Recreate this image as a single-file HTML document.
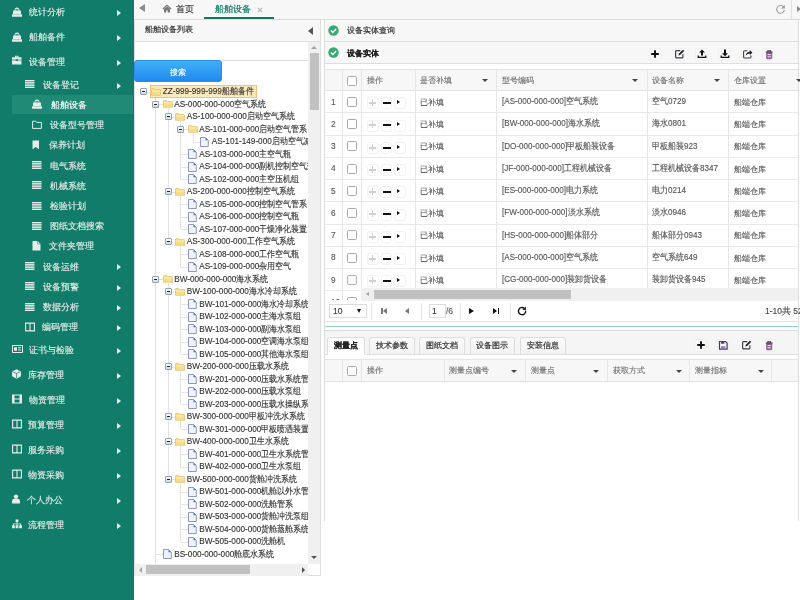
<!DOCTYPE html><html><head><meta charset="utf-8"><title>船舶设备</title><style>
*{box-sizing:border-box;margin:0;padding:0}
html,body{width:800px;height:600px;overflow:hidden;background:#fff}
body{position:relative;font-family:"Liberation Sans",sans-serif;color:#333}
.ab{position:absolute}
.t{position:absolute;white-space:nowrap;line-height:1;-webkit-text-stroke:0.12px currentColor}
.s{-webkit-text-stroke:0.2px currentColor}
body{filter:blur(0.3px)}
</style></head><body>
<div class="ab" style="left:0.00px;top:0.00px;width:134.00px;height:600.00px;background:#127c6a"></div>
<svg class="ab" style="left:12.00px;top:6.50px" width="11" height="10" viewBox="0 0 11 10"><path d="M2.6 3Q2.6 0.4 5 0.4T7.4 3z M1 7V4.4q0-1.2 1.2-1.2h5.6q1.2 0 1.2 1.2V7z M0 7.3h10v2.4h-10z" fill="#e6ece8"/><rect x="3.5" y="1.9" width="3" height="1.4" fill="#127c6a" opacity="0.75"/></svg>
<div class="t" style="left:29.00px;top:8.10px;font-size:9px;color:#e2ebe6;-webkit-text-stroke:0.15px #e2ebe6">统计分析</div>
<div class="ab" style="left:117.00px;top:10.00px;width:0;height:0;border-top:3.50px solid transparent;border-bottom:3.50px solid transparent;border-left:4.50px solid #e8eeea"></div>
<svg class="ab" style="left:12.00px;top:31.50px" width="11" height="10" viewBox="0 0 11 10"><path d="M2.6 3Q2.6 0.4 5 0.4T7.4 3z M1 7V4.4q0-1.2 1.2-1.2h5.6q1.2 0 1.2 1.2V7z M0 7.3h10v2.4h-10z" fill="#e6ece8"/><rect x="3.5" y="1.9" width="3" height="1.4" fill="#127c6a" opacity="0.75"/></svg>
<div class="t" style="left:29.00px;top:33.10px;font-size:9px;color:#e2ebe6;-webkit-text-stroke:0.15px #e2ebe6">船舶备件</div>
<div class="ab" style="left:117.00px;top:35.00px;width:0;height:0;border-top:3.50px solid transparent;border-bottom:3.50px solid transparent;border-left:4.50px solid #e8eeea"></div>
<svg class="ab" style="left:12.00px;top:55.40px" width="11" height="10" viewBox="0 0 11 10"><path d="M3 0.8h3.5v1.6h-0.9v-0.7h-1.7v0.7h-0.9z M0 2.2h9.5v7.3h-9.5z" fill="#e6ece8"/><path d="M0 5h9.5" stroke="#127c6a" stroke-width="0.7"/><rect x="3.8" y="4.4" width="2" height="1.6" fill="#127c6a"/></svg>
<div class="t" style="left:29.00px;top:58.10px;font-size:9px;color:#e2ebe6;-webkit-text-stroke:0.15px #e2ebe6">设备管理</div>
<div class="ab" style="left:117.00px;top:60.00px;width:0;height:0;border-top:3.50px solid transparent;border-bottom:3.50px solid transparent;border-left:4.50px solid #e8eeea"></div>
<svg class="ab" style="left:25.00px;top:79.30px" width="11" height="10" viewBox="0 0 11 10"><rect x="0" y="1.0" width="9.5" height="1.2" fill="#e6ece8"/><rect x="0" y="2.7" width="9.5" height="1.2" fill="#e6ece8"/><rect x="0" y="4.4" width="9.5" height="1.2" fill="#e6ece8"/><rect x="0" y="6.1" width="9.5" height="1.2" fill="#e6ece8"/><rect x="0" y="7.8" width="9.5" height="1.2" fill="#e6ece8"/></svg>
<div class="t" style="left:43.00px;top:80.70px;font-size:9px;color:#e2ebe6;-webkit-text-stroke:0.15px #e2ebe6">设备登记</div>
<div class="ab" style="left:117.00px;top:82.60px;width:0;height:0;border-top:3.50px solid transparent;border-bottom:3.50px solid transparent;border-left:4.50px solid #e8eeea"></div>
<div class="ab" style="left:12.00px;top:95.00px;width:121.00px;height:19.00px;background:#218a77"></div>
<svg class="ab" style="left:32.00px;top:99.30px" width="11" height="10" viewBox="0 0 11 10"><path d="M2.6 3Q2.6 0.4 5 0.4T7.4 3z M1 7V4.4q0-1.2 1.2-1.2h5.6q1.2 0 1.2 1.2V7z M0 7.3h10v2.4h-10z" fill="#e6ece8"/><rect x="3.5" y="1.9" width="3" height="1.4" fill="#127c6a" opacity="0.75"/></svg>
<div class="t" style="left:51.00px;top:100.90px;font-size:9px;color:#ffffff;-webkit-text-stroke:0.15px #ffffff">船舶设备</div>
<svg class="ab" style="left:32.00px;top:119.70px" width="11" height="10" viewBox="0 0 11 10"><path d="M0.6 1.2h3l1 1.2h4.8v6h-8.8z" fill="none" stroke="#e6ece8" stroke-width="1"/></svg>
<div class="t" style="left:50.00px;top:121.10px;font-size:9px;color:#e2ebe6;-webkit-text-stroke:0.15px #e2ebe6">设备型号管理</div>
<svg class="ab" style="left:32.00px;top:139.90px" width="11" height="10" viewBox="0 0 11 10"><path d="M0.5 0.5h6.5v8.8l-3.25-2.4l-3.25 2.4z" fill="#e6ece8"/></svg>
<div class="t" style="left:48.50px;top:141.30px;font-size:9px;color:#e2ebe6;-webkit-text-stroke:0.15px #e2ebe6">保养计划</div>
<svg class="ab" style="left:32.00px;top:160.10px" width="11" height="10" viewBox="0 0 11 10"><rect x="0" y="1.0" width="9.5" height="1.2" fill="#e6ece8"/><rect x="0" y="2.7" width="9.5" height="1.2" fill="#e6ece8"/><rect x="0" y="4.4" width="9.5" height="1.2" fill="#e6ece8"/><rect x="0" y="6.1" width="9.5" height="1.2" fill="#e6ece8"/><rect x="0" y="7.8" width="9.5" height="1.2" fill="#e6ece8"/></svg>
<div class="t" style="left:50.00px;top:161.50px;font-size:9px;color:#e2ebe6;-webkit-text-stroke:0.15px #e2ebe6">电气系统</div>
<svg class="ab" style="left:32.00px;top:180.30px" width="11" height="10" viewBox="0 0 11 10"><rect x="0" y="1.0" width="9.5" height="1.2" fill="#e6ece8"/><rect x="0" y="2.7" width="9.5" height="1.2" fill="#e6ece8"/><rect x="0" y="4.4" width="9.5" height="1.2" fill="#e6ece8"/><rect x="0" y="6.1" width="9.5" height="1.2" fill="#e6ece8"/><rect x="0" y="7.8" width="9.5" height="1.2" fill="#e6ece8"/></svg>
<div class="t" style="left:50.00px;top:181.70px;font-size:9px;color:#e2ebe6;-webkit-text-stroke:0.15px #e2ebe6">机械系统</div>
<svg class="ab" style="left:32.00px;top:200.50px" width="11" height="10" viewBox="0 0 11 10"><rect x="0" y="1.0" width="9.5" height="1.2" fill="#e6ece8"/><rect x="0" y="2.7" width="9.5" height="1.2" fill="#e6ece8"/><rect x="0" y="4.4" width="9.5" height="1.2" fill="#e6ece8"/><rect x="0" y="6.1" width="9.5" height="1.2" fill="#e6ece8"/><rect x="0" y="7.8" width="9.5" height="1.2" fill="#e6ece8"/></svg>
<div class="t" style="left:50.00px;top:201.90px;font-size:9px;color:#e2ebe6;-webkit-text-stroke:0.15px #e2ebe6">检验计划</div>
<svg class="ab" style="left:32.00px;top:220.70px" width="11" height="10" viewBox="0 0 11 10"><rect x="0" y="1.0" width="9.5" height="1.2" fill="#e6ece8"/><rect x="0" y="2.7" width="9.5" height="1.2" fill="#e6ece8"/><rect x="0" y="4.4" width="9.5" height="1.2" fill="#e6ece8"/><rect x="0" y="6.1" width="9.5" height="1.2" fill="#e6ece8"/><rect x="0" y="7.8" width="9.5" height="1.2" fill="#e6ece8"/></svg>
<div class="t" style="left:50.00px;top:222.10px;font-size:9px;color:#e2ebe6;-webkit-text-stroke:0.15px #e2ebe6">图纸文档搜索</div>
<svg class="ab" style="left:32.00px;top:240.90px" width="11" height="10" viewBox="0 0 11 10"><path d="M0.5 0h5l3 3v6.5h-8z" fill="#e6ece8"/><path d="M5.5 0v3h3" fill="none" stroke="#127c6a" stroke-width="0.5"/></svg>
<div class="t" style="left:48.50px;top:242.30px;font-size:9px;color:#e2ebe6;-webkit-text-stroke:0.15px #e2ebe6">文件夹管理</div>
<svg class="ab" style="left:25.00px;top:261.10px" width="11" height="10" viewBox="0 0 11 10"><rect x="0" y="1.0" width="9.5" height="1.2" fill="#e6ece8"/><rect x="0" y="2.7" width="9.5" height="1.2" fill="#e6ece8"/><rect x="0" y="4.4" width="9.5" height="1.2" fill="#e6ece8"/><rect x="0" y="6.1" width="9.5" height="1.2" fill="#e6ece8"/><rect x="0" y="7.8" width="9.5" height="1.2" fill="#e6ece8"/></svg>
<div class="t" style="left:43.00px;top:262.50px;font-size:9px;color:#e2ebe6;-webkit-text-stroke:0.15px #e2ebe6">设备运维</div>
<div class="ab" style="left:117.00px;top:264.40px;width:0;height:0;border-top:3.50px solid transparent;border-bottom:3.50px solid transparent;border-left:4.50px solid #e8eeea"></div>
<svg class="ab" style="left:25.00px;top:281.30px" width="11" height="10" viewBox="0 0 11 10"><rect x="0" y="1.0" width="9.5" height="1.2" fill="#e6ece8"/><rect x="0" y="2.7" width="9.5" height="1.2" fill="#e6ece8"/><rect x="0" y="4.4" width="9.5" height="1.2" fill="#e6ece8"/><rect x="0" y="6.1" width="9.5" height="1.2" fill="#e6ece8"/><rect x="0" y="7.8" width="9.5" height="1.2" fill="#e6ece8"/></svg>
<div class="t" style="left:43.00px;top:282.70px;font-size:9px;color:#e2ebe6;-webkit-text-stroke:0.15px #e2ebe6">设备预警</div>
<div class="ab" style="left:117.00px;top:284.60px;width:0;height:0;border-top:3.50px solid transparent;border-bottom:3.50px solid transparent;border-left:4.50px solid #e8eeea"></div>
<svg class="ab" style="left:25.00px;top:301.50px" width="11" height="10" viewBox="0 0 11 10"><rect x="0" y="1.0" width="9.5" height="1.2" fill="#e6ece8"/><rect x="0" y="2.7" width="9.5" height="1.2" fill="#e6ece8"/><rect x="0" y="4.4" width="9.5" height="1.2" fill="#e6ece8"/><rect x="0" y="6.1" width="9.5" height="1.2" fill="#e6ece8"/><rect x="0" y="7.8" width="9.5" height="1.2" fill="#e6ece8"/></svg>
<div class="t" style="left:43.00px;top:302.90px;font-size:9px;color:#e2ebe6;-webkit-text-stroke:0.15px #e2ebe6">数据分析</div>
<div class="ab" style="left:117.00px;top:304.80px;width:0;height:0;border-top:3.50px solid transparent;border-bottom:3.50px solid transparent;border-left:4.50px solid #e8eeea"></div>
<svg class="ab" style="left:25.00px;top:321.70px" width="11" height="10" viewBox="0 0 11 10"><path d="M0.6 1.1h8.8v7.8h-8.8z M5 1.1v7.8" fill="none" stroke="#e6ece8" stroke-width="1.1"/></svg>
<div class="t" style="left:42.00px;top:323.10px;font-size:9px;color:#e2ebe6;-webkit-text-stroke:0.15px #e2ebe6">编码管理</div>
<div class="ab" style="left:117.00px;top:325.00px;width:0;height:0;border-top:3.50px solid transparent;border-bottom:3.50px solid transparent;border-left:4.50px solid #e8eeea"></div>
<svg class="ab" style="left:12.00px;top:344.30px" width="11" height="10" viewBox="0 0 11 10"><path d="M0.5 1.5h10v7h-10z" fill="none" stroke="#e6ece8" stroke-width="1"/><path d="M2 3.2h3v3.6h-3z M6 3.2h3v1h-3z M6 5.4h3v1h-3z" fill="#e6ece8"/></svg>
<div class="t" style="left:29.00px;top:345.70px;font-size:9px;color:#e2ebe6;-webkit-text-stroke:0.15px #e2ebe6">证书与检验</div>
<div class="ab" style="left:117.00px;top:347.60px;width:0;height:0;border-top:3.50px solid transparent;border-bottom:3.50px solid transparent;border-left:4.50px solid #e8eeea"></div>
<svg class="ab" style="left:12.00px;top:369.30px" width="11" height="10" viewBox="0 0 11 10"><path d="M4.5 0.3l4.5 2.2v4.8l-4.5 2.5l-4.5-2.5v-4.8z" fill="#e6ece8"/><path d="M0.5 2.6l4 2l4-2 M4.5 4.6v4.5" stroke="#127c6a" stroke-width="0.7" fill="none"/></svg>
<div class="t" style="left:28.00px;top:370.70px;font-size:9px;color:#e2ebe6;-webkit-text-stroke:0.15px #e2ebe6">库存管理</div>
<div class="ab" style="left:117.00px;top:372.60px;width:0;height:0;border-top:3.50px solid transparent;border-bottom:3.50px solid transparent;border-left:4.50px solid #e8eeea"></div>
<svg class="ab" style="left:12.00px;top:394.30px" width="11" height="10" viewBox="0 0 11 10"><path d="M0 0.5h10v9h-10z" fill="#e6ece8"/><path d="M2.5 1.5h5v3h-5z M2.5 5.5h5v3h-5z" fill="#127c6a"/></svg>
<div class="t" style="left:29.00px;top:395.70px;font-size:9px;color:#e2ebe6;-webkit-text-stroke:0.15px #e2ebe6">物资管理</div>
<div class="ab" style="left:117.00px;top:397.60px;width:0;height:0;border-top:3.50px solid transparent;border-bottom:3.50px solid transparent;border-left:4.50px solid #e8eeea"></div>
<svg class="ab" style="left:12.00px;top:419.30px" width="11" height="10" viewBox="0 0 11 10"><path d="M0.6 1.1h8.8v7.8h-8.8z M5 1.1v7.8" fill="none" stroke="#e6ece8" stroke-width="1.1"/></svg>
<div class="t" style="left:27.50px;top:420.70px;font-size:9px;color:#e2ebe6;-webkit-text-stroke:0.15px #e2ebe6">预算管理</div>
<div class="ab" style="left:117.00px;top:422.60px;width:0;height:0;border-top:3.50px solid transparent;border-bottom:3.50px solid transparent;border-left:4.50px solid #e8eeea"></div>
<svg class="ab" style="left:12.00px;top:444.30px" width="11" height="10" viewBox="0 0 11 10"><path d="M0.6 1.1h8.8v7.8h-8.8z M5 1.1v7.8" fill="none" stroke="#e6ece8" stroke-width="1.1"/></svg>
<div class="t" style="left:27.50px;top:445.70px;font-size:9px;color:#e2ebe6;-webkit-text-stroke:0.15px #e2ebe6">服务采购</div>
<div class="ab" style="left:117.00px;top:447.60px;width:0;height:0;border-top:3.50px solid transparent;border-bottom:3.50px solid transparent;border-left:4.50px solid #e8eeea"></div>
<svg class="ab" style="left:12.00px;top:469.30px" width="11" height="10" viewBox="0 0 11 10"><path d="M0.6 1.1h8.8v7.8h-8.8z M5 1.1v7.8" fill="none" stroke="#e6ece8" stroke-width="1.1"/></svg>
<div class="t" style="left:27.50px;top:470.70px;font-size:9px;color:#e2ebe6;-webkit-text-stroke:0.15px #e2ebe6">物资采购</div>
<div class="ab" style="left:117.00px;top:472.60px;width:0;height:0;border-top:3.50px solid transparent;border-bottom:3.50px solid transparent;border-left:4.50px solid #e8eeea"></div>
<svg class="ab" style="left:12.00px;top:494.30px" width="11" height="10" viewBox="0 0 11 10"><circle cx="4" cy="2.6" r="2.2" fill="#e6ece8"/><path d="M0 9.5v-2.5q0-2 2-2.2h4q2 .2 2 2.2v2.5z" fill="#e6ece8"/></svg>
<div class="t" style="left:26.50px;top:495.70px;font-size:9px;color:#e2ebe6;-webkit-text-stroke:0.15px #e2ebe6">个人办公</div>
<div class="ab" style="left:117.00px;top:497.60px;width:0;height:0;border-top:3.50px solid transparent;border-bottom:3.50px solid transparent;border-left:4.50px solid #e8eeea"></div>
<svg class="ab" style="left:12.00px;top:519.30px" width="11" height="10" viewBox="0 0 11 10"><path d="M3.6 0.5h2.8v2.5h-2.8z M4.6 3h0.8v1.6h-0.8z M1 4.4h8v0.8h-8z M1 5.2h0.8v1h-0.8z M4.6 5.2h0.8v1h-0.8z M8.2 5.2h0.8v1h-0.8z M0 6.2h2.8v3h-2.8z M3.6 6.2h2.8v3h-2.8z M7.2 6.2h2.8v3h-2.8z" fill="#e6ece8"/></svg>
<div class="t" style="left:28.00px;top:520.70px;font-size:9px;color:#e2ebe6;-webkit-text-stroke:0.15px #e2ebe6">流程管理</div>
<div class="ab" style="left:117.00px;top:522.60px;width:0;height:0;border-top:3.50px solid transparent;border-bottom:3.50px solid transparent;border-left:4.50px solid #e8eeea"></div>
<div class="ab" style="left:134.00px;top:0.00px;width:666.00px;height:20.00px;background:#f7f7f7;border-bottom:1px solid #dcdcdc"></div>
<div class="ab" style="left:139.00px;top:4.00px;width:0;height:0;border-top:4.75px solid transparent;border-bottom:4.75px solid transparent;border-right:6.00px solid #8a8a8a"></div>
<svg class="ab" style="left:162.00px;top:4.00px" width="10" height="9" viewBox="0 0 10 9"><path d="M5 0.5L0.5 4.6l0.8 0.8L5 2.1l3.7 3.3l0.8-0.8z M2 5v3.5h2.2v-2h1.6v2H8V5L5 2.5z" fill="#7a7a7a"/></svg>
<div class="t s" style="left:176.00px;top:4.70px;font-size:9.2px;color:#444;">首页</div>
<div class="t s" style="left:215.00px;top:4.70px;font-size:9.2px;color:#137966;">船舶设备</div>
<svg class="ab" style="left:256.50px;top:6.50px" width="6" height="6" viewBox="0 0 6 6"><path d="M0.8 0.8l4.4 4.4 M5.2 0.8l-4.4 4.4" stroke="#b5b5b5" stroke-width="1.1"/></svg>
<div class="ab" style="left:204.00px;top:17.00px;width:70.00px;height:2.00px;background:#137966"></div>
<svg class="ab" style="left:775.00px;top:3.50px" width="11" height="11" viewBox="0 0 11 11"><path d="M8.6 2.9A3.9 3.9 0 1 0 9.4 6.2" fill="none" stroke="#9a9a9a" stroke-width="1.1"/><path d="M9.8 0.8v3.6H6.2z" fill="#9a9a9a"/></svg>
<div class="ab" style="left:791.00px;top:0.00px;width:1.00px;height:20.00px;background:#e0e0e0"></div>
<div class="ab" style="left:797.00px;top:6.00px;width:0;height:0;border-top:3.50px solid transparent;border-bottom:3.50px solid transparent;border-left:4.00px solid #8a8a8a"></div>
<div class="ab" style="left:134.00px;top:20.00px;width:187.00px;height:556.00px;border:1px solid #dedede;border-top:none;background:#fff"></div>
<div class="ab" style="left:135.00px;top:20.00px;width:185.00px;height:22.00px;background:#f7f7f7;border-bottom:1px solid #dedede"></div>
<div class="t s" style="left:145.00px;top:26.40px;font-size:8.2px;color:#333;">船舶设备列表</div>
<div class="ab" style="left:308.00px;top:27.00px;width:0;height:0;border-top:4.25px solid transparent;border-bottom:4.25px solid transparent;border-right:5.50px solid #555"></div>
<div class="ab" style="left:221.00px;top:60.00px;width:87.00px;height:1.00px;background:#dcdcdc"></div>
<div class="ab" style="left:134.00px;top:60.00px;width:87.50px;height:21.50px;border-radius:3px;background:linear-gradient(#41b1f8,#1f89ef);border:1px solid #2a8fea"></div>
<div class="t" style="left:170.00px;top:68.15px;font-size:8.3px;color:#fff;">搜索</div>
<div class="ab" style="left:135px;top:82px;width:173px;height:481px;overflow:hidden">
<div class="ab" style="left:20.00px;top:13.50px;width:1.00px;height:471.00px;background:#e3e3e3"></div>
<div class="ab" style="left:11.00px;top:9.50px;width:5.00px;height:1.00px;background:#e3e3e3"></div>
<div class="ab" style="left:15.00px;top:3.00px;width:107.00px;height:12.50px;background:#fde8b9;border:1px solid #f9bf78"></div>
<div class="ab" style="left:4.50px;top:6.00px;width:7px;height:7px;border:1px solid #8fa3b9;border-radius:1px;background:linear-gradient(#fdfdfd,#d3d8de)"><div class="ab" style="left:1px;top:2px;width:3px;height:1px;background:#222"></div></div>
<svg class="ab" style="left:16.30px;top:5.50px" width="10" height="8" viewBox="0 0 10 8"><path d="M0.5 1.2q0-0.7 0.7-0.7h2.3l0.9 1h4.4q0.7 0 0.7 0.7v5.1h-9z" fill="#f7dd88" stroke="#dcb656" stroke-width="0.6"/><path d="M0.8 3h8.4" stroke="#fcf0c0" stroke-width="0.9"/></svg>
<div class="t" style="left:27.70px;top:6.30px;font-size:8.2px;color:#333;transform:scaleY(1.13);transform-origin:0 50%">ZZ-999-999-999船舶备件</div>
<div class="ab" style="left:32.50px;top:26.00px;width:1.00px;height:133.50px;background:#e3e3e3"></div>
<div class="ab" style="left:23.50px;top:22.00px;width:5.00px;height:1.00px;background:#e3e3e3"></div>
<div class="ab" style="left:17.00px;top:18.50px;width:7px;height:7px;border:1px solid #8fa3b9;border-radius:1px;background:linear-gradient(#fdfdfd,#d3d8de)"><div class="ab" style="left:1px;top:2px;width:3px;height:1px;background:#222"></div></div>
<svg class="ab" style="left:27.80px;top:18.00px" width="10" height="8" viewBox="0 0 10 8"><path d="M0.5 1.2q0-0.7 0.7-0.7h2.3l0.9 1h4.4q0.7 0 0.7 0.7v5.1h-9z" fill="#f7dd88" stroke="#dcb656" stroke-width="0.6"/><path d="M0.8 3h8.4" stroke="#fcf0c0" stroke-width="0.9"/></svg>
<div class="t" style="left:39.20px;top:18.80px;font-size:8.2px;color:#333;transform:scaleY(1.13);transform-origin:0 50%">AS-000-000-000空气系统</div>
<div class="ab" style="left:45.00px;top:38.50px;width:1.00px;height:58.50px;background:#e3e3e3"></div>
<div class="ab" style="left:36.00px;top:34.50px;width:5.00px;height:1.00px;background:#e3e3e3"></div>
<div class="ab" style="left:29.50px;top:31.00px;width:7px;height:7px;border:1px solid #8fa3b9;border-radius:1px;background:linear-gradient(#fdfdfd,#d3d8de)"><div class="ab" style="left:1px;top:2px;width:3px;height:1px;background:#222"></div></div>
<svg class="ab" style="left:40.30px;top:30.50px" width="10" height="8" viewBox="0 0 10 8"><path d="M0.5 1.2q0-0.7 0.7-0.7h2.3l0.9 1h4.4q0.7 0 0.7 0.7v5.1h-9z" fill="#f7dd88" stroke="#dcb656" stroke-width="0.6"/><path d="M0.8 3h8.4" stroke="#fcf0c0" stroke-width="0.9"/></svg>
<div class="t" style="left:51.70px;top:31.30px;font-size:8.2px;color:#333;transform:scaleY(1.13);transform-origin:0 50%">AS-100-000-000启动空气系统</div>
<div class="ab" style="left:57.50px;top:51.00px;width:1.00px;height:8.50px;background:#e3e3e3"></div>
<div class="ab" style="left:48.50px;top:47.00px;width:5.00px;height:1.00px;background:#e3e3e3"></div>
<div class="ab" style="left:42.00px;top:43.50px;width:7px;height:7px;border:1px solid #8fa3b9;border-radius:1px;background:linear-gradient(#fdfdfd,#d3d8de)"><div class="ab" style="left:1px;top:2px;width:3px;height:1px;background:#222"></div></div>
<svg class="ab" style="left:52.80px;top:43.00px" width="10" height="8" viewBox="0 0 10 8"><path d="M0.5 1.2q0-0.7 0.7-0.7h2.3l0.9 1h4.4q0.7 0 0.7 0.7v5.1h-9z" fill="#f7dd88" stroke="#dcb656" stroke-width="0.6"/><path d="M0.8 3h8.4" stroke="#fcf0c0" stroke-width="0.9"/></svg>
<div class="t" style="left:64.20px;top:43.80px;font-size:8.2px;color:#333;transform:scaleY(1.13);transform-origin:0 50%">AS-101-000-000启动空气管系</div>
<div class="ab" style="left:58.00px;top:59.50px;width:7.00px;height:1.00px;background:#e3e3e3"></div>
<svg class="ab" style="left:65.30px;top:54.80px" width="9" height="10" viewBox="0 0 9 10"><path d="M0.5 0.5h5l2.8 2.8v6.2h-7.8z" fill="#eef3fc" stroke="#7080b4" stroke-width="0.8"/><path d="M5.5 0.5v2.8h2.8z" fill="#5a73c4"/></svg>
<div class="t" style="left:76.70px;top:56.30px;font-size:8.2px;color:#333;transform:scaleY(1.13);transform-origin:0 50%">AS-101-149-000启动空气减压阀</div>
<div class="ab" style="left:45.50px;top:72.00px;width:7.00px;height:1.00px;background:#e3e3e3"></div>
<svg class="ab" style="left:52.80px;top:67.30px" width="9" height="10" viewBox="0 0 9 10"><path d="M0.5 0.5h5l2.8 2.8v6.2h-7.8z" fill="#eef3fc" stroke="#7080b4" stroke-width="0.8"/><path d="M5.5 0.5v2.8h2.8z" fill="#5a73c4"/></svg>
<div class="t" style="left:64.20px;top:68.80px;font-size:8.2px;color:#333;transform:scaleY(1.13);transform-origin:0 50%">AS-103-000-000主空气瓶</div>
<div class="ab" style="left:45.50px;top:84.50px;width:7.00px;height:1.00px;background:#e3e3e3"></div>
<svg class="ab" style="left:52.80px;top:79.80px" width="9" height="10" viewBox="0 0 9 10"><path d="M0.5 0.5h5l2.8 2.8v6.2h-7.8z" fill="#eef3fc" stroke="#7080b4" stroke-width="0.8"/><path d="M5.5 0.5v2.8h2.8z" fill="#5a73c4"/></svg>
<div class="t" style="left:64.20px;top:81.30px;font-size:8.2px;color:#333;transform:scaleY(1.13);transform-origin:0 50%">AS-104-000-000副机控制空气瓶</div>
<div class="ab" style="left:45.50px;top:97.00px;width:7.00px;height:1.00px;background:#e3e3e3"></div>
<svg class="ab" style="left:52.80px;top:92.30px" width="9" height="10" viewBox="0 0 9 10"><path d="M0.5 0.5h5l2.8 2.8v6.2h-7.8z" fill="#eef3fc" stroke="#7080b4" stroke-width="0.8"/><path d="M5.5 0.5v2.8h2.8z" fill="#5a73c4"/></svg>
<div class="t" style="left:64.20px;top:93.80px;font-size:8.2px;color:#333;transform:scaleY(1.13);transform-origin:0 50%">AS-102-000-000主空压机组</div>
<div class="ab" style="left:45.00px;top:113.50px;width:1.00px;height:33.50px;background:#e3e3e3"></div>
<div class="ab" style="left:36.00px;top:109.50px;width:5.00px;height:1.00px;background:#e3e3e3"></div>
<div class="ab" style="left:29.50px;top:106.00px;width:7px;height:7px;border:1px solid #8fa3b9;border-radius:1px;background:linear-gradient(#fdfdfd,#d3d8de)"><div class="ab" style="left:1px;top:2px;width:3px;height:1px;background:#222"></div></div>
<svg class="ab" style="left:40.30px;top:105.50px" width="10" height="8" viewBox="0 0 10 8"><path d="M0.5 1.2q0-0.7 0.7-0.7h2.3l0.9 1h4.4q0.7 0 0.7 0.7v5.1h-9z" fill="#f7dd88" stroke="#dcb656" stroke-width="0.6"/><path d="M0.8 3h8.4" stroke="#fcf0c0" stroke-width="0.9"/></svg>
<div class="t" style="left:51.70px;top:106.30px;font-size:8.2px;color:#333;transform:scaleY(1.13);transform-origin:0 50%">AS-200-000-000控制空气系统</div>
<div class="ab" style="left:45.50px;top:122.00px;width:7.00px;height:1.00px;background:#e3e3e3"></div>
<svg class="ab" style="left:52.80px;top:117.30px" width="9" height="10" viewBox="0 0 9 10"><path d="M0.5 0.5h5l2.8 2.8v6.2h-7.8z" fill="#eef3fc" stroke="#7080b4" stroke-width="0.8"/><path d="M5.5 0.5v2.8h2.8z" fill="#5a73c4"/></svg>
<div class="t" style="left:64.20px;top:118.80px;font-size:8.2px;color:#333;transform:scaleY(1.13);transform-origin:0 50%">AS-105-000-000控制空气管系</div>
<div class="ab" style="left:45.50px;top:134.50px;width:7.00px;height:1.00px;background:#e3e3e3"></div>
<svg class="ab" style="left:52.80px;top:129.80px" width="9" height="10" viewBox="0 0 9 10"><path d="M0.5 0.5h5l2.8 2.8v6.2h-7.8z" fill="#eef3fc" stroke="#7080b4" stroke-width="0.8"/><path d="M5.5 0.5v2.8h2.8z" fill="#5a73c4"/></svg>
<div class="t" style="left:64.20px;top:131.30px;font-size:8.2px;color:#333;transform:scaleY(1.13);transform-origin:0 50%">AS-106-000-000控制空气瓶</div>
<div class="ab" style="left:45.50px;top:147.00px;width:7.00px;height:1.00px;background:#e3e3e3"></div>
<svg class="ab" style="left:52.80px;top:142.30px" width="9" height="10" viewBox="0 0 9 10"><path d="M0.5 0.5h5l2.8 2.8v6.2h-7.8z" fill="#eef3fc" stroke="#7080b4" stroke-width="0.8"/><path d="M5.5 0.5v2.8h2.8z" fill="#5a73c4"/></svg>
<div class="t" style="left:64.20px;top:143.80px;font-size:8.2px;color:#333;transform:scaleY(1.13);transform-origin:0 50%">AS-107-000-000干燥净化装置</div>
<div class="ab" style="left:45.00px;top:163.50px;width:1.00px;height:21.00px;background:#e3e3e3"></div>
<div class="ab" style="left:36.00px;top:159.50px;width:5.00px;height:1.00px;background:#e3e3e3"></div>
<div class="ab" style="left:29.50px;top:156.00px;width:7px;height:7px;border:1px solid #8fa3b9;border-radius:1px;background:linear-gradient(#fdfdfd,#d3d8de)"><div class="ab" style="left:1px;top:2px;width:3px;height:1px;background:#222"></div></div>
<svg class="ab" style="left:40.30px;top:155.50px" width="10" height="8" viewBox="0 0 10 8"><path d="M0.5 1.2q0-0.7 0.7-0.7h2.3l0.9 1h4.4q0.7 0 0.7 0.7v5.1h-9z" fill="#f7dd88" stroke="#dcb656" stroke-width="0.6"/><path d="M0.8 3h8.4" stroke="#fcf0c0" stroke-width="0.9"/></svg>
<div class="t" style="left:51.70px;top:156.30px;font-size:8.2px;color:#333;transform:scaleY(1.13);transform-origin:0 50%">AS-300-000-000工作空气系统</div>
<div class="ab" style="left:45.50px;top:172.00px;width:7.00px;height:1.00px;background:#e3e3e3"></div>
<svg class="ab" style="left:52.80px;top:167.30px" width="9" height="10" viewBox="0 0 9 10"><path d="M0.5 0.5h5l2.8 2.8v6.2h-7.8z" fill="#eef3fc" stroke="#7080b4" stroke-width="0.8"/><path d="M5.5 0.5v2.8h2.8z" fill="#5a73c4"/></svg>
<div class="t" style="left:64.20px;top:168.80px;font-size:8.2px;color:#333;transform:scaleY(1.13);transform-origin:0 50%">AS-108-000-000工作空气瓶</div>
<div class="ab" style="left:45.50px;top:184.50px;width:7.00px;height:1.00px;background:#e3e3e3"></div>
<svg class="ab" style="left:52.80px;top:179.80px" width="9" height="10" viewBox="0 0 9 10"><path d="M0.5 0.5h5l2.8 2.8v6.2h-7.8z" fill="#eef3fc" stroke="#7080b4" stroke-width="0.8"/><path d="M5.5 0.5v2.8h2.8z" fill="#5a73c4"/></svg>
<div class="t" style="left:64.20px;top:181.30px;font-size:8.2px;color:#333;transform:scaleY(1.13);transform-origin:0 50%">AS-109-000-000杂用空气</div>
<div class="ab" style="left:32.50px;top:201.00px;width:1.00px;height:196.00px;background:#e3e3e3"></div>
<div class="ab" style="left:23.50px;top:197.00px;width:5.00px;height:1.00px;background:#e3e3e3"></div>
<div class="ab" style="left:17.00px;top:193.50px;width:7px;height:7px;border:1px solid #8fa3b9;border-radius:1px;background:linear-gradient(#fdfdfd,#d3d8de)"><div class="ab" style="left:1px;top:2px;width:3px;height:1px;background:#222"></div></div>
<svg class="ab" style="left:27.80px;top:193.00px" width="10" height="8" viewBox="0 0 10 8"><path d="M0.5 1.2q0-0.7 0.7-0.7h2.3l0.9 1h4.4q0.7 0 0.7 0.7v5.1h-9z" fill="#f7dd88" stroke="#dcb656" stroke-width="0.6"/><path d="M0.8 3h8.4" stroke="#fcf0c0" stroke-width="0.9"/></svg>
<div class="t" style="left:39.20px;top:193.80px;font-size:8.2px;color:#333;transform:scaleY(1.13);transform-origin:0 50%">BW-000-000-000海水系统</div>
<div class="ab" style="left:45.00px;top:213.50px;width:1.00px;height:58.50px;background:#e3e3e3"></div>
<div class="ab" style="left:36.00px;top:209.50px;width:5.00px;height:1.00px;background:#e3e3e3"></div>
<div class="ab" style="left:29.50px;top:206.00px;width:7px;height:7px;border:1px solid #8fa3b9;border-radius:1px;background:linear-gradient(#fdfdfd,#d3d8de)"><div class="ab" style="left:1px;top:2px;width:3px;height:1px;background:#222"></div></div>
<svg class="ab" style="left:40.30px;top:205.50px" width="10" height="8" viewBox="0 0 10 8"><path d="M0.5 1.2q0-0.7 0.7-0.7h2.3l0.9 1h4.4q0.7 0 0.7 0.7v5.1h-9z" fill="#f7dd88" stroke="#dcb656" stroke-width="0.6"/><path d="M0.8 3h8.4" stroke="#fcf0c0" stroke-width="0.9"/></svg>
<div class="t" style="left:51.70px;top:206.30px;font-size:8.2px;color:#333;transform:scaleY(1.13);transform-origin:0 50%">BW-100-000-000海水冷却系统</div>
<div class="ab" style="left:45.50px;top:222.00px;width:7.00px;height:1.00px;background:#e3e3e3"></div>
<svg class="ab" style="left:52.80px;top:217.30px" width="9" height="10" viewBox="0 0 9 10"><path d="M0.5 0.5h5l2.8 2.8v6.2h-7.8z" fill="#eef3fc" stroke="#7080b4" stroke-width="0.8"/><path d="M5.5 0.5v2.8h2.8z" fill="#5a73c4"/></svg>
<div class="t" style="left:64.20px;top:218.80px;font-size:8.2px;color:#333;transform:scaleY(1.13);transform-origin:0 50%">BW-101-000-000海水冷却系统管</div>
<div class="ab" style="left:45.50px;top:234.50px;width:7.00px;height:1.00px;background:#e3e3e3"></div>
<svg class="ab" style="left:52.80px;top:229.80px" width="9" height="10" viewBox="0 0 9 10"><path d="M0.5 0.5h5l2.8 2.8v6.2h-7.8z" fill="#eef3fc" stroke="#7080b4" stroke-width="0.8"/><path d="M5.5 0.5v2.8h2.8z" fill="#5a73c4"/></svg>
<div class="t" style="left:64.20px;top:231.30px;font-size:8.2px;color:#333;transform:scaleY(1.13);transform-origin:0 50%">BW-102-000-000主海水泵组</div>
<div class="ab" style="left:45.50px;top:247.00px;width:7.00px;height:1.00px;background:#e3e3e3"></div>
<svg class="ab" style="left:52.80px;top:242.30px" width="9" height="10" viewBox="0 0 9 10"><path d="M0.5 0.5h5l2.8 2.8v6.2h-7.8z" fill="#eef3fc" stroke="#7080b4" stroke-width="0.8"/><path d="M5.5 0.5v2.8h2.8z" fill="#5a73c4"/></svg>
<div class="t" style="left:64.20px;top:243.80px;font-size:8.2px;color:#333;transform:scaleY(1.13);transform-origin:0 50%">BW-103-000-000副海水泵组</div>
<div class="ab" style="left:45.50px;top:259.50px;width:7.00px;height:1.00px;background:#e3e3e3"></div>
<svg class="ab" style="left:52.80px;top:254.80px" width="9" height="10" viewBox="0 0 9 10"><path d="M0.5 0.5h5l2.8 2.8v6.2h-7.8z" fill="#eef3fc" stroke="#7080b4" stroke-width="0.8"/><path d="M5.5 0.5v2.8h2.8z" fill="#5a73c4"/></svg>
<div class="t" style="left:64.20px;top:256.30px;font-size:8.2px;color:#333;transform:scaleY(1.13);transform-origin:0 50%">BW-104-000-000空调海水泵组</div>
<div class="ab" style="left:45.50px;top:272.00px;width:7.00px;height:1.00px;background:#e3e3e3"></div>
<svg class="ab" style="left:52.80px;top:267.30px" width="9" height="10" viewBox="0 0 9 10"><path d="M0.5 0.5h5l2.8 2.8v6.2h-7.8z" fill="#eef3fc" stroke="#7080b4" stroke-width="0.8"/><path d="M5.5 0.5v2.8h2.8z" fill="#5a73c4"/></svg>
<div class="t" style="left:64.20px;top:268.80px;font-size:8.2px;color:#333;transform:scaleY(1.13);transform-origin:0 50%">BW-105-000-000其他海水泵组</div>
<div class="ab" style="left:45.00px;top:288.50px;width:1.00px;height:33.50px;background:#e3e3e3"></div>
<div class="ab" style="left:36.00px;top:284.50px;width:5.00px;height:1.00px;background:#e3e3e3"></div>
<div class="ab" style="left:29.50px;top:281.00px;width:7px;height:7px;border:1px solid #8fa3b9;border-radius:1px;background:linear-gradient(#fdfdfd,#d3d8de)"><div class="ab" style="left:1px;top:2px;width:3px;height:1px;background:#222"></div></div>
<svg class="ab" style="left:40.30px;top:280.50px" width="10" height="8" viewBox="0 0 10 8"><path d="M0.5 1.2q0-0.7 0.7-0.7h2.3l0.9 1h4.4q0.7 0 0.7 0.7v5.1h-9z" fill="#f7dd88" stroke="#dcb656" stroke-width="0.6"/><path d="M0.8 3h8.4" stroke="#fcf0c0" stroke-width="0.9"/></svg>
<div class="t" style="left:51.70px;top:281.30px;font-size:8.2px;color:#333;transform:scaleY(1.13);transform-origin:0 50%">BW-200-000-000压载水系统</div>
<div class="ab" style="left:45.50px;top:297.00px;width:7.00px;height:1.00px;background:#e3e3e3"></div>
<svg class="ab" style="left:52.80px;top:292.30px" width="9" height="10" viewBox="0 0 9 10"><path d="M0.5 0.5h5l2.8 2.8v6.2h-7.8z" fill="#eef3fc" stroke="#7080b4" stroke-width="0.8"/><path d="M5.5 0.5v2.8h2.8z" fill="#5a73c4"/></svg>
<div class="t" style="left:64.20px;top:293.80px;font-size:8.2px;color:#333;transform:scaleY(1.13);transform-origin:0 50%">BW-201-000-000压载水系统管</div>
<div class="ab" style="left:45.50px;top:309.50px;width:7.00px;height:1.00px;background:#e3e3e3"></div>
<svg class="ab" style="left:52.80px;top:304.80px" width="9" height="10" viewBox="0 0 9 10"><path d="M0.5 0.5h5l2.8 2.8v6.2h-7.8z" fill="#eef3fc" stroke="#7080b4" stroke-width="0.8"/><path d="M5.5 0.5v2.8h2.8z" fill="#5a73c4"/></svg>
<div class="t" style="left:64.20px;top:306.30px;font-size:8.2px;color:#333;transform:scaleY(1.13);transform-origin:0 50%">BW-202-000-000压载水泵组</div>
<div class="ab" style="left:45.50px;top:322.00px;width:7.00px;height:1.00px;background:#e3e3e3"></div>
<svg class="ab" style="left:52.80px;top:317.30px" width="9" height="10" viewBox="0 0 9 10"><path d="M0.5 0.5h5l2.8 2.8v6.2h-7.8z" fill="#eef3fc" stroke="#7080b4" stroke-width="0.8"/><path d="M5.5 0.5v2.8h2.8z" fill="#5a73c4"/></svg>
<div class="t" style="left:64.20px;top:318.80px;font-size:8.2px;color:#333;transform:scaleY(1.13);transform-origin:0 50%">BW-203-000-000压载水操纵系统</div>
<div class="ab" style="left:45.00px;top:338.50px;width:1.00px;height:8.50px;background:#e3e3e3"></div>
<div class="ab" style="left:36.00px;top:334.50px;width:5.00px;height:1.00px;background:#e3e3e3"></div>
<div class="ab" style="left:29.50px;top:331.00px;width:7px;height:7px;border:1px solid #8fa3b9;border-radius:1px;background:linear-gradient(#fdfdfd,#d3d8de)"><div class="ab" style="left:1px;top:2px;width:3px;height:1px;background:#222"></div></div>
<svg class="ab" style="left:40.30px;top:330.50px" width="10" height="8" viewBox="0 0 10 8"><path d="M0.5 1.2q0-0.7 0.7-0.7h2.3l0.9 1h4.4q0.7 0 0.7 0.7v5.1h-9z" fill="#f7dd88" stroke="#dcb656" stroke-width="0.6"/><path d="M0.8 3h8.4" stroke="#fcf0c0" stroke-width="0.9"/></svg>
<div class="t" style="left:51.70px;top:331.30px;font-size:8.2px;color:#333;transform:scaleY(1.13);transform-origin:0 50%">BW-300-000-000甲板冲洗水系统</div>
<div class="ab" style="left:45.50px;top:347.00px;width:7.00px;height:1.00px;background:#e3e3e3"></div>
<svg class="ab" style="left:52.80px;top:342.30px" width="9" height="10" viewBox="0 0 9 10"><path d="M0.5 0.5h5l2.8 2.8v6.2h-7.8z" fill="#eef3fc" stroke="#7080b4" stroke-width="0.8"/><path d="M5.5 0.5v2.8h2.8z" fill="#5a73c4"/></svg>
<div class="t" style="left:64.20px;top:343.80px;font-size:8.2px;color:#333;transform:scaleY(1.13);transform-origin:0 50%">BW-301-000-000甲板喷洒装置</div>
<div class="ab" style="left:45.00px;top:363.50px;width:1.00px;height:21.00px;background:#e3e3e3"></div>
<div class="ab" style="left:36.00px;top:359.50px;width:5.00px;height:1.00px;background:#e3e3e3"></div>
<div class="ab" style="left:29.50px;top:356.00px;width:7px;height:7px;border:1px solid #8fa3b9;border-radius:1px;background:linear-gradient(#fdfdfd,#d3d8de)"><div class="ab" style="left:1px;top:2px;width:3px;height:1px;background:#222"></div></div>
<svg class="ab" style="left:40.30px;top:355.50px" width="10" height="8" viewBox="0 0 10 8"><path d="M0.5 1.2q0-0.7 0.7-0.7h2.3l0.9 1h4.4q0.7 0 0.7 0.7v5.1h-9z" fill="#f7dd88" stroke="#dcb656" stroke-width="0.6"/><path d="M0.8 3h8.4" stroke="#fcf0c0" stroke-width="0.9"/></svg>
<div class="t" style="left:51.70px;top:356.30px;font-size:8.2px;color:#333;transform:scaleY(1.13);transform-origin:0 50%">BW-400-000-000卫生水系统</div>
<div class="ab" style="left:45.50px;top:372.00px;width:7.00px;height:1.00px;background:#e3e3e3"></div>
<svg class="ab" style="left:52.80px;top:367.30px" width="9" height="10" viewBox="0 0 9 10"><path d="M0.5 0.5h5l2.8 2.8v6.2h-7.8z" fill="#eef3fc" stroke="#7080b4" stroke-width="0.8"/><path d="M5.5 0.5v2.8h2.8z" fill="#5a73c4"/></svg>
<div class="t" style="left:64.20px;top:368.80px;font-size:8.2px;color:#333;transform:scaleY(1.13);transform-origin:0 50%">BW-401-000-000卫生水系统管</div>
<div class="ab" style="left:45.50px;top:384.50px;width:7.00px;height:1.00px;background:#e3e3e3"></div>
<svg class="ab" style="left:52.80px;top:379.80px" width="9" height="10" viewBox="0 0 9 10"><path d="M0.5 0.5h5l2.8 2.8v6.2h-7.8z" fill="#eef3fc" stroke="#7080b4" stroke-width="0.8"/><path d="M5.5 0.5v2.8h2.8z" fill="#5a73c4"/></svg>
<div class="t" style="left:64.20px;top:381.30px;font-size:8.2px;color:#333;transform:scaleY(1.13);transform-origin:0 50%">BW-402-000-000卫生水泵组</div>
<div class="ab" style="left:45.00px;top:401.00px;width:1.00px;height:58.50px;background:#e3e3e3"></div>
<div class="ab" style="left:36.00px;top:397.00px;width:5.00px;height:1.00px;background:#e3e3e3"></div>
<div class="ab" style="left:29.50px;top:393.50px;width:7px;height:7px;border:1px solid #8fa3b9;border-radius:1px;background:linear-gradient(#fdfdfd,#d3d8de)"><div class="ab" style="left:1px;top:2px;width:3px;height:1px;background:#222"></div></div>
<svg class="ab" style="left:40.30px;top:393.00px" width="10" height="8" viewBox="0 0 10 8"><path d="M0.5 1.2q0-0.7 0.7-0.7h2.3l0.9 1h4.4q0.7 0 0.7 0.7v5.1h-9z" fill="#f7dd88" stroke="#dcb656" stroke-width="0.6"/><path d="M0.8 3h8.4" stroke="#fcf0c0" stroke-width="0.9"/></svg>
<div class="t" style="left:51.70px;top:393.80px;font-size:8.2px;color:#333;transform:scaleY(1.13);transform-origin:0 50%">BW-500-000-000货舱冲洗系统</div>
<div class="ab" style="left:45.50px;top:409.50px;width:7.00px;height:1.00px;background:#e3e3e3"></div>
<svg class="ab" style="left:52.80px;top:404.80px" width="9" height="10" viewBox="0 0 9 10"><path d="M0.5 0.5h5l2.8 2.8v6.2h-7.8z" fill="#eef3fc" stroke="#7080b4" stroke-width="0.8"/><path d="M5.5 0.5v2.8h2.8z" fill="#5a73c4"/></svg>
<div class="t" style="left:64.20px;top:406.30px;font-size:8.2px;color:#333;transform:scaleY(1.13);transform-origin:0 50%">BW-501-000-000机舱以外水管</div>
<div class="ab" style="left:45.50px;top:422.00px;width:7.00px;height:1.00px;background:#e3e3e3"></div>
<svg class="ab" style="left:52.80px;top:417.30px" width="9" height="10" viewBox="0 0 9 10"><path d="M0.5 0.5h5l2.8 2.8v6.2h-7.8z" fill="#eef3fc" stroke="#7080b4" stroke-width="0.8"/><path d="M5.5 0.5v2.8h2.8z" fill="#5a73c4"/></svg>
<div class="t" style="left:64.20px;top:418.80px;font-size:8.2px;color:#333;transform:scaleY(1.13);transform-origin:0 50%">BW-502-000-000洗舱管系</div>
<div class="ab" style="left:45.50px;top:434.50px;width:7.00px;height:1.00px;background:#e3e3e3"></div>
<svg class="ab" style="left:52.80px;top:429.80px" width="9" height="10" viewBox="0 0 9 10"><path d="M0.5 0.5h5l2.8 2.8v6.2h-7.8z" fill="#eef3fc" stroke="#7080b4" stroke-width="0.8"/><path d="M5.5 0.5v2.8h2.8z" fill="#5a73c4"/></svg>
<div class="t" style="left:64.20px;top:431.30px;font-size:8.2px;color:#333;transform:scaleY(1.13);transform-origin:0 50%">BW-503-000-000货舱冲洗泵组</div>
<div class="ab" style="left:45.50px;top:447.00px;width:7.00px;height:1.00px;background:#e3e3e3"></div>
<svg class="ab" style="left:52.80px;top:442.30px" width="9" height="10" viewBox="0 0 9 10"><path d="M0.5 0.5h5l2.8 2.8v6.2h-7.8z" fill="#eef3fc" stroke="#7080b4" stroke-width="0.8"/><path d="M5.5 0.5v2.8h2.8z" fill="#5a73c4"/></svg>
<div class="t" style="left:64.20px;top:443.80px;font-size:8.2px;color:#333;transform:scaleY(1.13);transform-origin:0 50%">BW-504-000-000货舱蒸舱系统</div>
<div class="ab" style="left:45.50px;top:459.50px;width:7.00px;height:1.00px;background:#e3e3e3"></div>
<svg class="ab" style="left:52.80px;top:454.80px" width="9" height="10" viewBox="0 0 9 10"><path d="M0.5 0.5h5l2.8 2.8v6.2h-7.8z" fill="#eef3fc" stroke="#7080b4" stroke-width="0.8"/><path d="M5.5 0.5v2.8h2.8z" fill="#5a73c4"/></svg>
<div class="t" style="left:64.20px;top:456.30px;font-size:8.2px;color:#333;transform:scaleY(1.13);transform-origin:0 50%">BW-505-000-000洗舱机</div>
<div class="ab" style="left:20.50px;top:472.00px;width:7.00px;height:1.00px;background:#e3e3e3"></div>
<svg class="ab" style="left:27.80px;top:467.30px" width="9" height="10" viewBox="0 0 9 10"><path d="M0.5 0.5h5l2.8 2.8v6.2h-7.8z" fill="#eef3fc" stroke="#7080b4" stroke-width="0.8"/><path d="M5.5 0.5v2.8h2.8z" fill="#5a73c4"/></svg>
<div class="t" style="left:39.20px;top:468.80px;font-size:8.2px;color:#333;transform:scaleY(1.13);transform-origin:0 50%">BS-000-000-000舱底水系统</div>
<div class="ab" style="left:23.50px;top:484.50px;width:5.00px;height:1.00px;background:#e3e3e3"></div>
<div class="ab" style="left:17.00px;top:481.00px;width:7px;height:7px;border:1px solid #8fa3b9;border-radius:1px;background:linear-gradient(#fdfdfd,#d3d8de)"><div class="ab" style="left:1px;top:2px;width:3px;height:1px;background:#222"></div></div>
<svg class="ab" style="left:27.80px;top:480.50px" width="10" height="8" viewBox="0 0 10 8"><path d="M0.5 1.2q0-0.7 0.7-0.7h2.3l0.9 1h4.4q0.7 0 0.7 0.7v5.1h-9z" fill="#f7dd88" stroke="#dcb656" stroke-width="0.6"/><path d="M0.8 3h8.4" stroke="#fcf0c0" stroke-width="0.9"/></svg>
</div>
<div class="ab" style="left:308.00px;top:42.00px;width:12.00px;height:521.50px;background:#f0f0f0"></div>
<div class="ab" style="left:311.00px;top:46.00px;width:0;height:0;border-left:3.00px solid transparent;border-right:3.00px solid transparent;border-bottom:3.00px solid #a3a3a3"></div>
<div class="ab" style="left:309.50px;top:53.00px;width:9.00px;height:57.00px;background:#c1c1c1"></div>
<div class="ab" style="left:311.00px;top:556.00px;width:0;height:0;border-left:3.00px solid transparent;border-right:3.00px solid transparent;border-top:3.00px solid #505050"></div>
<div class="ab" style="left:135.00px;top:563.50px;width:173.00px;height:12.00px;background:#f0f0f0"></div>
<div class="ab" style="left:139.00px;top:566.50px;width:0;height:0;border-top:3.00px solid transparent;border-bottom:3.00px solid transparent;border-right:3.00px solid #a3a3a3"></div>
<div class="ab" style="left:146.00px;top:565.00px;width:104.00px;height:9.00px;background:#c1c1c1"></div>
<div class="ab" style="left:302.00px;top:566.50px;width:0;height:0;border-top:3.00px solid transparent;border-bottom:3.00px solid transparent;border-left:3.00px solid #505050"></div>
<div class="ab" style="left:324.00px;top:19.00px;width:475.00px;height:502.00px;border:1px solid #dedede;border-bottom:none;background:#fff"></div>
<div class="ab" style="left:325.00px;top:20.00px;width:473.00px;height:22.00px;background:#f7f7f7;border-bottom:1px solid #dedede"></div>
<svg class="ab" style="left:327.50px;top:25.00px" width="11" height="11" viewBox="0 0 11 11"><circle cx="5.5" cy="5.5" r="5.2" fill="#3aa874"/><path d="M2.9 5.6l1.8 1.8l3.5-3.5" fill="none" stroke="#fff" stroke-width="1.4"/></svg>
<div class="t s" style="left:347.00px;top:26.35px;font-size:8.3px;color:#333;">设备实体查询</div>
<div class="ab" style="left:325.00px;top:42.00px;width:473.00px;height:22.00px;background:#f7f7f7;border-bottom:1px solid #dedede"></div>
<svg class="ab" style="left:327.50px;top:47.00px" width="11" height="11" viewBox="0 0 11 11"><circle cx="5.5" cy="5.5" r="5.2" fill="#3aa874"/><path d="M2.9 5.6l1.8 1.8l3.5-3.5" fill="none" stroke="#fff" stroke-width="1.4"/></svg>
<div class="t" style="left:347.00px;top:48.65px;font-size:8.3px;color:#222;font-weight:bold">设备实体</div>
<div class="ab" style="left:648.50px;top:47.50px;width:13.00px;height:13.00px;border-radius:3px;background:#f8f8f8;border:1px solid #f0f0f0"></div>
<svg class="ab" style="left:648.00px;top:47.00px" width="14" height="14" viewBox="0 0 14 14"><path d="M7 3.2v7.6 M3.2 7h7.6" stroke="#111" stroke-width="1.9"/></svg>
<div class="ab" style="left:672.00px;top:47.50px;width:13.00px;height:13.00px;border-radius:3px;background:#f8f8f8;border:1px solid #f0f0f0"></div>
<svg class="ab" style="left:671.50px;top:47.00px" width="14" height="14" viewBox="0 0 14 14"><path d="M8.3 3.6H4.6q-1 0-1 1v5.3q0 1 1 1h5.3q1 0 1-1V7.2" fill="none" stroke="#3d3d46" stroke-width="1.2"/><path d="M6.3 8.6l0.5-1.8l4.1-4.1l1.3 1.3l-4.1 4.1z" fill="#222"/></svg>
<div class="ab" style="left:695.00px;top:47.50px;width:13.00px;height:13.00px;border-radius:3px;background:#f8f8f8;border:1px solid #f0f0f0"></div>
<svg class="ab" style="left:694.50px;top:47.00px" width="14" height="14" viewBox="0 0 14 14"><path d="M7 2.6l3 3h-2v3h-2v-3h-2z" fill="#111"/><path d="M2.6 8.6v2.5h8.8v-2.5h-1.3v1.2h-6.2v-1.2z" fill="#111"/></svg>
<div class="ab" style="left:718.00px;top:47.50px;width:13.00px;height:13.00px;border-radius:3px;background:#f8f8f8;border:1px solid #f0f0f0"></div>
<svg class="ab" style="left:717.50px;top:47.00px" width="14" height="14" viewBox="0 0 14 14"><path d="M7 9.2l3-3h-2v-3.6h-2v3.6h-2z" fill="#111"/><path d="M2.6 8.6v2.5h8.8v-2.5h-1.3v1.2h-6.2v-1.2z" fill="#111"/></svg>
<div class="ab" style="left:740.50px;top:47.50px;width:13.00px;height:13.00px;border-radius:3px;background:#f8f8f8;border:1px solid #f0f0f0"></div>
<svg class="ab" style="left:740.00px;top:47.00px" width="14" height="14" viewBox="0 0 14 14"><path d="M7.3 3.7H4.6q-1 0-1 1v5.3q0 1 1 1h5.3q1 0 1-1V8.4" fill="none" stroke="#3d3d46" stroke-width="1.1"/><path d="M5.8 8.6q0.3-3.8 4-3.8v-1.8l2.6 2.6l-2.6 2.6v-1.8q-2.3 0-4 2.2z" fill="#222"/></svg>
<div class="ab" style="left:762.00px;top:47.50px;width:13.00px;height:13.00px;border-radius:3px;background:#f8f8f8;border:1px solid #f0f0f0"></div>
<svg class="ab" style="left:761.50px;top:47.00px" width="14" height="14" viewBox="0 0 14 14"><path d="M4.6 6h5.2v5.2q0 .6-.6 .6h-4q-.6 0-.6-.6z" fill="#a565ad" stroke="#5a3f66" stroke-width="0.6"/><path d="M3.8 5.1h6.8 M5.8 5v-1.2h2.8v1.2" fill="none" stroke="#3f3448" stroke-width="1.1"/><path d="M5.6 7.6h3.2 M5.6 9.8h3.2" stroke="#f0e6f2" stroke-width="0.9"/></svg>
<div class="ab" style="left:325.00px;top:69.00px;width:473.00px;height:22.00px;background:#f7f7f7;border-top:1px solid #e3e3e3;border-bottom:1px solid #e3e3e3"></div>
<div class="ab" style="left:347.00px;top:75.50px;width:10.00px;height:10.00px;border:1px solid #a9a9a9;border-radius:1.5px;background:#fff"></div>
<div class="t" style="left:367.00px;top:76.35px;font-size:8.3px;color:#6e6e6e;">操作</div>
<div class="t" style="left:420.00px;top:76.35px;font-size:8.3px;color:#6e6e6e;">是否补填</div>
<div class="t" style="left:502.00px;top:76.35px;font-size:8.3px;color:#6e6e6e;">型号编码</div>
<div class="t" style="left:652.00px;top:76.35px;font-size:8.3px;color:#6e6e6e;">设备名称</div>
<div class="t" style="left:734.00px;top:76.35px;font-size:8.3px;color:#6e6e6e;">仓库设置</div>
<div class="ab" style="left:482.00px;top:79.00px;width:0;height:0;border-left:3.00px solid transparent;border-right:3.00px solid transparent;border-top:3.20px solid #444"></div>
<div class="ab" style="left:632.00px;top:79.00px;width:0;height:0;border-left:3.00px solid transparent;border-right:3.00px solid transparent;border-top:3.20px solid #444"></div>
<div class="ab" style="left:714.00px;top:79.00px;width:0;height:0;border-left:3.00px solid transparent;border-right:3.00px solid transparent;border-top:3.20px solid #444"></div>
<div class="ab" style="left:796.00px;top:79.00px;width:0;height:0;border-left:3.00px solid transparent;border-right:3.00px solid transparent;border-top:3.20px solid #444"></div>
<div class="ab" style="left:325px;top:91px;width:473px;height:208.6px;overflow:hidden">
<div class="ab" style="left:0.00px;top:21.25px;width:473.00px;height:1.00px;background:#e9e9e9"></div>
<div class="t" style="left:6.00px;top:6.68px;font-size:8.3px;color:#555;">1</div>
<div class="ab" style="left:22.00px;top:6.00px;width:10.00px;height:10.00px;border:1px solid #a9a9a9;border-radius:1.5px;background:#fff"></div>
<div class="ab" style="left:42.00px;top:6.00px;width:11.50px;height:11.50px;border-radius:3px;border:1px solid #f2f2f2;background:#fff"></div>
<div class="ab" style="left:55.50px;top:6.00px;width:11.50px;height:11.50px;border-radius:3px;border:1px solid #f2f2f2;background:#fff"></div>
<div class="ab" style="left:69.00px;top:6.00px;width:11.50px;height:11.50px;border-radius:3px;border:1px solid #f2f2f2;background:#fff"></div>
<div class="ab" style="left:44.00px;top:11.00px;width:7.00px;height:1.50px;background:#d0d0d0"></div>
<div class="ab" style="left:46.75px;top:8.00px;width:1.50px;height:7.00px;background:#d0d0d0"></div>
<div class="ab" style="left:58.00px;top:11.00px;width:7.50px;height:2.00px;background:#111"></div>
<div class="ab" style="left:72.00px;top:9.00px;width:0;height:0;border-top:2.75px solid transparent;border-bottom:2.75px solid transparent;border-left:3.50px solid #111"></div>
<div class="t" style="left:95.00px;top:6.77px;font-size:8.3px;color:#555;">已补填</div>
<div class="t" style="left:177.00px;top:7.08px;font-size:8.1px;color:#555;transform:scaleY(1.12);transform-origin:0 50%">[AS-000-000-000]空气系统</div>
<div class="t" style="left:327.00px;top:7.08px;font-size:8.1px;color:#555;transform:scaleY(1.12);transform-origin:0 50%">空气0729</div>
<div class="t" style="left:409.00px;top:6.77px;font-size:8.3px;color:#555;">船端仓库</div>
<div class="ab" style="left:0.00px;top:43.50px;width:473.00px;height:1.00px;background:#e9e9e9"></div>
<div class="t" style="left:6.00px;top:28.93px;font-size:8.3px;color:#555;">2</div>
<div class="ab" style="left:22.00px;top:28.00px;width:10.00px;height:10.00px;border:1px solid #a9a9a9;border-radius:1.5px;background:#fff"></div>
<div class="ab" style="left:42.00px;top:29.00px;width:11.50px;height:11.50px;border-radius:3px;border:1px solid #f2f2f2;background:#fff"></div>
<div class="ab" style="left:55.50px;top:29.00px;width:11.50px;height:11.50px;border-radius:3px;border:1px solid #f2f2f2;background:#fff"></div>
<div class="ab" style="left:69.00px;top:29.00px;width:11.50px;height:11.50px;border-radius:3px;border:1px solid #f2f2f2;background:#fff"></div>
<div class="ab" style="left:44.00px;top:33.00px;width:7.00px;height:1.50px;background:#d0d0d0"></div>
<div class="ab" style="left:46.75px;top:30.00px;width:1.50px;height:7.00px;background:#d0d0d0"></div>
<div class="ab" style="left:58.00px;top:33.00px;width:7.50px;height:2.00px;background:#111"></div>
<div class="ab" style="left:72.00px;top:31.00px;width:0;height:0;border-top:2.75px solid transparent;border-bottom:2.75px solid transparent;border-left:3.50px solid #111"></div>
<div class="t" style="left:95.00px;top:29.02px;font-size:8.3px;color:#555;">已补填</div>
<div class="t" style="left:177.00px;top:29.32px;font-size:8.1px;color:#555;transform:scaleY(1.12);transform-origin:0 50%">[BW-000-000-000]海水系统</div>
<div class="t" style="left:327.00px;top:29.32px;font-size:8.1px;color:#555;transform:scaleY(1.12);transform-origin:0 50%">海水0801</div>
<div class="t" style="left:409.00px;top:29.02px;font-size:8.3px;color:#555;">船端仓库</div>
<div class="ab" style="left:0.00px;top:65.75px;width:473.00px;height:1.00px;background:#e9e9e9"></div>
<div class="t" style="left:6.00px;top:51.17px;font-size:8.3px;color:#555;">3</div>
<div class="ab" style="left:22.00px;top:50.00px;width:10.00px;height:10.00px;border:1px solid #a9a9a9;border-radius:1.5px;background:#fff"></div>
<div class="ab" style="left:42.00px;top:51.00px;width:11.50px;height:11.50px;border-radius:3px;border:1px solid #f2f2f2;background:#fff"></div>
<div class="ab" style="left:55.50px;top:51.00px;width:11.50px;height:11.50px;border-radius:3px;border:1px solid #f2f2f2;background:#fff"></div>
<div class="ab" style="left:69.00px;top:51.00px;width:11.50px;height:11.50px;border-radius:3px;border:1px solid #f2f2f2;background:#fff"></div>
<div class="ab" style="left:44.00px;top:56.00px;width:7.00px;height:1.50px;background:#d0d0d0"></div>
<div class="ab" style="left:46.75px;top:53.00px;width:1.50px;height:7.00px;background:#d0d0d0"></div>
<div class="ab" style="left:58.00px;top:56.00px;width:7.50px;height:2.00px;background:#111"></div>
<div class="ab" style="left:72.00px;top:54.00px;width:0;height:0;border-top:2.75px solid transparent;border-bottom:2.75px solid transparent;border-left:3.50px solid #111"></div>
<div class="t" style="left:95.00px;top:51.28px;font-size:8.3px;color:#555;">已补填</div>
<div class="t" style="left:177.00px;top:51.58px;font-size:8.1px;color:#555;transform:scaleY(1.12);transform-origin:0 50%">[DO-000-000-000]甲板船装设备</div>
<div class="t" style="left:327.00px;top:51.58px;font-size:8.1px;color:#555;transform:scaleY(1.12);transform-origin:0 50%">甲板船装923</div>
<div class="t" style="left:409.00px;top:51.28px;font-size:8.3px;color:#555;">船端仓库</div>
<div class="ab" style="left:0.00px;top:88.00px;width:473.00px;height:1.00px;background:#e9e9e9"></div>
<div class="t" style="left:6.00px;top:73.42px;font-size:8.3px;color:#555;">4</div>
<div class="ab" style="left:22.00px;top:73.00px;width:10.00px;height:10.00px;border:1px solid #a9a9a9;border-radius:1.5px;background:#fff"></div>
<div class="ab" style="left:42.00px;top:73.00px;width:11.50px;height:11.50px;border-radius:3px;border:1px solid #f2f2f2;background:#fff"></div>
<div class="ab" style="left:55.50px;top:73.00px;width:11.50px;height:11.50px;border-radius:3px;border:1px solid #f2f2f2;background:#fff"></div>
<div class="ab" style="left:69.00px;top:73.00px;width:11.50px;height:11.50px;border-radius:3px;border:1px solid #f2f2f2;background:#fff"></div>
<div class="ab" style="left:44.00px;top:78.00px;width:7.00px;height:1.50px;background:#d0d0d0"></div>
<div class="ab" style="left:46.75px;top:75.00px;width:1.50px;height:7.00px;background:#d0d0d0"></div>
<div class="ab" style="left:58.00px;top:78.00px;width:7.50px;height:2.00px;background:#111"></div>
<div class="ab" style="left:72.00px;top:76.00px;width:0;height:0;border-top:2.75px solid transparent;border-bottom:2.75px solid transparent;border-left:3.50px solid #111"></div>
<div class="t" style="left:95.00px;top:73.53px;font-size:8.3px;color:#555;">已补填</div>
<div class="t" style="left:177.00px;top:73.83px;font-size:8.1px;color:#555;transform:scaleY(1.12);transform-origin:0 50%">[JF-000-000-000]工程机械设备</div>
<div class="t" style="left:327.00px;top:73.83px;font-size:8.1px;color:#555;transform:scaleY(1.12);transform-origin:0 50%">工程机械设备8347</div>
<div class="t" style="left:409.00px;top:73.53px;font-size:8.3px;color:#555;">船端仓库</div>
<div class="ab" style="left:0.00px;top:110.25px;width:473.00px;height:1.00px;background:#e9e9e9"></div>
<div class="t" style="left:6.00px;top:95.67px;font-size:8.3px;color:#555;">5</div>
<div class="ab" style="left:22.00px;top:95.00px;width:10.00px;height:10.00px;border:1px solid #a9a9a9;border-radius:1.5px;background:#fff"></div>
<div class="ab" style="left:42.00px;top:95.00px;width:11.50px;height:11.50px;border-radius:3px;border:1px solid #f2f2f2;background:#fff"></div>
<div class="ab" style="left:55.50px;top:95.00px;width:11.50px;height:11.50px;border-radius:3px;border:1px solid #f2f2f2;background:#fff"></div>
<div class="ab" style="left:69.00px;top:95.00px;width:11.50px;height:11.50px;border-radius:3px;border:1px solid #f2f2f2;background:#fff"></div>
<div class="ab" style="left:44.00px;top:100.00px;width:7.00px;height:1.50px;background:#d0d0d0"></div>
<div class="ab" style="left:46.75px;top:97.00px;width:1.50px;height:7.00px;background:#d0d0d0"></div>
<div class="ab" style="left:58.00px;top:100.00px;width:7.50px;height:2.00px;background:#111"></div>
<div class="ab" style="left:72.00px;top:98.00px;width:0;height:0;border-top:2.75px solid transparent;border-bottom:2.75px solid transparent;border-left:3.50px solid #111"></div>
<div class="t" style="left:95.00px;top:95.78px;font-size:8.3px;color:#555;">已补填</div>
<div class="t" style="left:177.00px;top:96.08px;font-size:8.1px;color:#555;transform:scaleY(1.12);transform-origin:0 50%">[ES-000-000-000]电力系统</div>
<div class="t" style="left:327.00px;top:96.08px;font-size:8.1px;color:#555;transform:scaleY(1.12);transform-origin:0 50%">电力0214</div>
<div class="t" style="left:409.00px;top:95.78px;font-size:8.3px;color:#555;">船端仓库</div>
<div class="ab" style="left:0.00px;top:132.50px;width:473.00px;height:1.00px;background:#e9e9e9"></div>
<div class="t" style="left:6.00px;top:117.92px;font-size:8.3px;color:#555;">6</div>
<div class="ab" style="left:22.00px;top:117.00px;width:10.00px;height:10.00px;border:1px solid #a9a9a9;border-radius:1.5px;background:#fff"></div>
<div class="ab" style="left:42.00px;top:118.00px;width:11.50px;height:11.50px;border-radius:3px;border:1px solid #f2f2f2;background:#fff"></div>
<div class="ab" style="left:55.50px;top:118.00px;width:11.50px;height:11.50px;border-radius:3px;border:1px solid #f2f2f2;background:#fff"></div>
<div class="ab" style="left:69.00px;top:118.00px;width:11.50px;height:11.50px;border-radius:3px;border:1px solid #f2f2f2;background:#fff"></div>
<div class="ab" style="left:44.00px;top:122.00px;width:7.00px;height:1.50px;background:#d0d0d0"></div>
<div class="ab" style="left:46.75px;top:119.00px;width:1.50px;height:7.00px;background:#d0d0d0"></div>
<div class="ab" style="left:58.00px;top:122.00px;width:7.50px;height:2.00px;background:#111"></div>
<div class="ab" style="left:72.00px;top:120.00px;width:0;height:0;border-top:2.75px solid transparent;border-bottom:2.75px solid transparent;border-left:3.50px solid #111"></div>
<div class="t" style="left:95.00px;top:118.03px;font-size:8.3px;color:#555;">已补填</div>
<div class="t" style="left:177.00px;top:118.33px;font-size:8.1px;color:#555;transform:scaleY(1.12);transform-origin:0 50%">[FW-000-000-000]淡水系统</div>
<div class="t" style="left:327.00px;top:118.33px;font-size:8.1px;color:#555;transform:scaleY(1.12);transform-origin:0 50%">淡水0946</div>
<div class="t" style="left:409.00px;top:118.03px;font-size:8.3px;color:#555;">船端仓库</div>
<div class="ab" style="left:0.00px;top:154.75px;width:473.00px;height:1.00px;background:#e9e9e9"></div>
<div class="t" style="left:6.00px;top:140.17px;font-size:8.3px;color:#555;">7</div>
<div class="ab" style="left:22.00px;top:139.00px;width:10.00px;height:10.00px;border:1px solid #a9a9a9;border-radius:1.5px;background:#fff"></div>
<div class="ab" style="left:42.00px;top:140.00px;width:11.50px;height:11.50px;border-radius:3px;border:1px solid #f2f2f2;background:#fff"></div>
<div class="ab" style="left:55.50px;top:140.00px;width:11.50px;height:11.50px;border-radius:3px;border:1px solid #f2f2f2;background:#fff"></div>
<div class="ab" style="left:69.00px;top:140.00px;width:11.50px;height:11.50px;border-radius:3px;border:1px solid #f2f2f2;background:#fff"></div>
<div class="ab" style="left:44.00px;top:145.00px;width:7.00px;height:1.50px;background:#d0d0d0"></div>
<div class="ab" style="left:46.75px;top:142.00px;width:1.50px;height:7.00px;background:#d0d0d0"></div>
<div class="ab" style="left:58.00px;top:145.00px;width:7.50px;height:2.00px;background:#111"></div>
<div class="ab" style="left:72.00px;top:143.00px;width:0;height:0;border-top:2.75px solid transparent;border-bottom:2.75px solid transparent;border-left:3.50px solid #111"></div>
<div class="t" style="left:95.00px;top:140.28px;font-size:8.3px;color:#555;">已补填</div>
<div class="t" style="left:177.00px;top:140.57px;font-size:8.1px;color:#555;transform:scaleY(1.12);transform-origin:0 50%">[HS-000-000-000]船体部分</div>
<div class="t" style="left:327.00px;top:140.57px;font-size:8.1px;color:#555;transform:scaleY(1.12);transform-origin:0 50%">船体部分0943</div>
<div class="t" style="left:409.00px;top:140.28px;font-size:8.3px;color:#555;">船端仓库</div>
<div class="ab" style="left:0.00px;top:177.00px;width:473.00px;height:1.00px;background:#e9e9e9"></div>
<div class="t" style="left:6.00px;top:162.42px;font-size:8.3px;color:#555;">8</div>
<div class="ab" style="left:22.00px;top:162.00px;width:10.00px;height:10.00px;border:1px solid #a9a9a9;border-radius:1.5px;background:#fff"></div>
<div class="ab" style="left:42.00px;top:162.00px;width:11.50px;height:11.50px;border-radius:3px;border:1px solid #f2f2f2;background:#fff"></div>
<div class="ab" style="left:55.50px;top:162.00px;width:11.50px;height:11.50px;border-radius:3px;border:1px solid #f2f2f2;background:#fff"></div>
<div class="ab" style="left:69.00px;top:162.00px;width:11.50px;height:11.50px;border-radius:3px;border:1px solid #f2f2f2;background:#fff"></div>
<div class="ab" style="left:44.00px;top:167.00px;width:7.00px;height:1.50px;background:#d0d0d0"></div>
<div class="ab" style="left:46.75px;top:164.00px;width:1.50px;height:7.00px;background:#d0d0d0"></div>
<div class="ab" style="left:58.00px;top:167.00px;width:7.50px;height:2.00px;background:#111"></div>
<div class="ab" style="left:72.00px;top:165.00px;width:0;height:0;border-top:2.75px solid transparent;border-bottom:2.75px solid transparent;border-left:3.50px solid #111"></div>
<div class="t" style="left:95.00px;top:162.53px;font-size:8.3px;color:#555;">已补填</div>
<div class="t" style="left:177.00px;top:162.82px;font-size:8.1px;color:#555;transform:scaleY(1.12);transform-origin:0 50%">[AS-000-000-000]空气系统</div>
<div class="t" style="left:327.00px;top:162.82px;font-size:8.1px;color:#555;transform:scaleY(1.12);transform-origin:0 50%">空气系统649</div>
<div class="t" style="left:409.00px;top:162.53px;font-size:8.3px;color:#555;">船端仓库</div>
<div class="ab" style="left:0.00px;top:199.25px;width:473.00px;height:1.00px;background:#e9e9e9"></div>
<div class="t" style="left:6.00px;top:184.67px;font-size:8.3px;color:#555;">9</div>
<div class="ab" style="left:22.00px;top:184.00px;width:10.00px;height:10.00px;border:1px solid #a9a9a9;border-radius:1.5px;background:#fff"></div>
<div class="ab" style="left:42.00px;top:184.00px;width:11.50px;height:11.50px;border-radius:3px;border:1px solid #f2f2f2;background:#fff"></div>
<div class="ab" style="left:55.50px;top:184.00px;width:11.50px;height:11.50px;border-radius:3px;border:1px solid #f2f2f2;background:#fff"></div>
<div class="ab" style="left:69.00px;top:184.00px;width:11.50px;height:11.50px;border-radius:3px;border:1px solid #f2f2f2;background:#fff"></div>
<div class="ab" style="left:44.00px;top:189.00px;width:7.00px;height:1.50px;background:#d0d0d0"></div>
<div class="ab" style="left:46.75px;top:186.00px;width:1.50px;height:7.00px;background:#d0d0d0"></div>
<div class="ab" style="left:58.00px;top:189.00px;width:7.50px;height:2.00px;background:#111"></div>
<div class="ab" style="left:72.00px;top:187.00px;width:0;height:0;border-top:2.75px solid transparent;border-bottom:2.75px solid transparent;border-left:3.50px solid #111"></div>
<div class="t" style="left:95.00px;top:184.78px;font-size:8.3px;color:#555;">已补填</div>
<div class="t" style="left:177.00px;top:185.07px;font-size:8.1px;color:#555;transform:scaleY(1.12);transform-origin:0 50%">[CG-000-000-000]装卸货设备</div>
<div class="t" style="left:327.00px;top:185.07px;font-size:8.1px;color:#555;transform:scaleY(1.12);transform-origin:0 50%">装卸货设备945</div>
<div class="t" style="left:409.00px;top:184.78px;font-size:8.3px;color:#555;">船端仓库</div>
<div class="ab" style="left:0.00px;top:221.50px;width:473.00px;height:1.00px;background:#e9e9e9"></div>
<div class="t" style="left:6.00px;top:206.92px;font-size:8.3px;color:#555;">10</div>
<div class="ab" style="left:22.00px;top:206.00px;width:10.00px;height:10.00px;border:1px solid #a9a9a9;border-radius:1.5px;background:#fff"></div>
<div class="ab" style="left:42.00px;top:207.00px;width:11.50px;height:11.50px;border-radius:3px;border:1px solid #f2f2f2;background:#fff"></div>
<div class="ab" style="left:55.50px;top:207.00px;width:11.50px;height:11.50px;border-radius:3px;border:1px solid #f2f2f2;background:#fff"></div>
<div class="ab" style="left:69.00px;top:207.00px;width:11.50px;height:11.50px;border-radius:3px;border:1px solid #f2f2f2;background:#fff"></div>
<div class="ab" style="left:44.00px;top:211.00px;width:7.00px;height:1.50px;background:#d0d0d0"></div>
<div class="ab" style="left:46.75px;top:208.00px;width:1.50px;height:7.00px;background:#d0d0d0"></div>
<div class="ab" style="left:58.00px;top:211.00px;width:7.50px;height:2.00px;background:#111"></div>
<div class="ab" style="left:72.00px;top:209.00px;width:0;height:0;border-top:2.75px solid transparent;border-bottom:2.75px solid transparent;border-left:3.50px solid #111"></div>
<div class="t" style="left:95.00px;top:207.03px;font-size:8.3px;color:#555;">已补填</div>
<div class="t" style="left:177.00px;top:207.32px;font-size:8.1px;color:#555;transform:scaleY(1.12);transform-origin:0 50%">[XX-000-000-000]其他系统</div>
<div class="t" style="left:327.00px;top:207.32px;font-size:8.1px;color:#555;transform:scaleY(1.12);transform-origin:0 50%">其他0001</div>
<div class="t" style="left:409.00px;top:207.03px;font-size:8.3px;color:#555;">船端仓库</div>
</div>
<div class="ab" style="left:342.00px;top:69.00px;width:1.00px;height:231.00px;background:#e6e6e6"></div>
<div class="ab" style="left:361.00px;top:69.00px;width:1.00px;height:231.00px;background:#e6e6e6"></div>
<div class="ab" style="left:415.00px;top:69.00px;width:1.00px;height:231.00px;background:#e6e6e6"></div>
<div class="ab" style="left:496.00px;top:69.00px;width:1.00px;height:231.00px;background:#e6e6e6"></div>
<div class="ab" style="left:647.00px;top:69.00px;width:1.00px;height:231.00px;background:#e6e6e6"></div>
<div class="ab" style="left:728.00px;top:69.00px;width:1.00px;height:231.00px;background:#e6e6e6"></div>
<div class="ab" style="left:361.00px;top:288.00px;width:437.00px;height:12.50px;background:#f0f0f0"></div>
<div class="ab" style="left:366.00px;top:291.50px;width:0;height:0;border-top:2.50px solid transparent;border-bottom:2.50px solid transparent;border-right:3.00px solid #a3a3a3"></div>
<div class="ab" style="left:374.00px;top:289.50px;width:197.00px;height:9.50px;background:#c1c1c1"></div>
<div class="ab" style="left:325.00px;top:300.50px;width:473.00px;height:21.50px;background:#fff;border-bottom:1px solid #e3e3e3"></div>
<div class="ab" style="left:329.00px;top:304.00px;width:38.00px;height:14.00px;border:1px solid #dcdcdc;background:#fff"></div>
<div class="t" style="left:333.00px;top:306.75px;font-size:8.5px;color:#333;">10</div>
<div class="ab" style="left:357.00px;top:309.00px;width:0;height:0;border-left:2.75px solid transparent;border-right:2.75px solid transparent;border-top:4.50px solid #111"></div>
<div class="ab" style="left:371.00px;top:303.00px;width:1.00px;height:16.50px;background:#e6e6e6"></div>
<div class="ab" style="left:421.00px;top:303.00px;width:1.00px;height:16.50px;background:#e6e6e6"></div>
<div class="ab" style="left:460.00px;top:303.00px;width:1.00px;height:16.50px;background:#e6e6e6"></div>
<div class="ab" style="left:509.50px;top:303.00px;width:1.00px;height:16.50px;background:#e6e6e6"></div>
<div class="ab" style="left:381.00px;top:307.50px;width:1.50px;height:6.50px;background:#777"></div>
<div class="ab" style="left:382.50px;top:307.50px;width:0;height:0;border-top:3.25px solid transparent;border-bottom:3.25px solid transparent;border-right:4.00px solid #777"></div>
<div class="ab" style="left:405.00px;top:307.50px;width:0;height:0;border-top:3.25px solid transparent;border-bottom:3.25px solid transparent;border-right:4.50px solid #777"></div>
<div class="ab" style="left:429.00px;top:304.00px;width:17.00px;height:14.00px;border:1px solid #dcdcdc;background:#fff"></div>
<div class="t" style="left:432.00px;top:306.75px;font-size:8.5px;color:#333;">1</div>
<div class="t" style="left:446.00px;top:306.75px;font-size:8.5px;color:#555;">/6</div>
<div class="ab" style="left:469.00px;top:307.50px;width:0;height:0;border-top:3.25px solid transparent;border-bottom:3.25px solid transparent;border-left:5.00px solid #111"></div>
<div class="ab" style="left:493.00px;top:307.50px;width:0;height:0;border-top:3.25px solid transparent;border-bottom:3.25px solid transparent;border-left:4.00px solid #111"></div>
<div class="ab" style="left:497.50px;top:307.50px;width:1.50px;height:6.50px;background:#111"></div>
<svg class="ab" style="left:517.00px;top:305.50px" width="10" height="10" viewBox="0 0 10 10"><path d="M7.3 2.3A3.6 3.6 0 1 0 8.6 4.6" fill="none" stroke="#111" stroke-width="1.4"/><path d="M8.8 0.6v3.3H5.5z" fill="#111"/></svg>
<div class="t" style="left:765.00px;top:306.75px;font-size:8.5px;color:#444;">1-10共 52</div>
<div class="ab" style="left:325.00px;top:326.00px;width:473.00px;height:1.20px;background:#8fd3bf"></div>
<div class="ab" style="left:325.00px;top:329.50px;width:473.00px;height:1.50px;background:#d8d8d8"></div>
<div class="ab" style="left:325.00px;top:331.00px;width:473.00px;height:24.00px;background:#f5f5f5;border-bottom:1px solid #dedede"></div>
<div class="ab" style="left:327.00px;top:336.50px;width:38.00px;height:18.50px;border:1px solid #dcdcdc;border-bottom:1px solid #fff;border-radius:3px 3px 0 0;background:#fff"></div>
<div class="t" style="left:333.80px;top:341.35px;font-size:8.3px;color:#222;font-weight:bold">测量点</div>
<div class="ab" style="left:369.00px;top:336.50px;width:46.00px;height:18.50px;border:1px solid #dcdcdc;border-bottom:1px solid #dedede;border-radius:3px 3px 0 0;background:linear-gradient(#fbfbfb,#f3f3f3)"></div>
<div class="t s" style="left:375.65px;top:341.35px;font-size:8.3px;color:#333;">技术参数</div>
<div class="ab" style="left:419.00px;top:336.50px;width:46.00px;height:18.50px;border:1px solid #dcdcdc;border-bottom:1px solid #dedede;border-radius:3px 3px 0 0;background:linear-gradient(#fbfbfb,#f3f3f3)"></div>
<div class="t s" style="left:425.65px;top:341.35px;font-size:8.3px;color:#333;">图纸文档</div>
<div class="ab" style="left:470.00px;top:336.50px;width:45.00px;height:18.50px;border:1px solid #dcdcdc;border-bottom:1px solid #dedede;border-radius:3px 3px 0 0;background:linear-gradient(#fbfbfb,#f3f3f3)"></div>
<div class="t s" style="left:476.15px;top:341.35px;font-size:8.3px;color:#333;">设备图示</div>
<div class="ab" style="left:520.00px;top:336.50px;width:46.00px;height:18.50px;border:1px solid #dcdcdc;border-bottom:1px solid #dedede;border-radius:3px 3px 0 0;background:linear-gradient(#fbfbfb,#f3f3f3)"></div>
<div class="t s" style="left:526.65px;top:341.35px;font-size:8.3px;color:#333;">安装信息</div>
<div class="ab" style="left:694.00px;top:338.50px;width:13.00px;height:13.00px;border-radius:3px;background:#f8f8f8;border:1px solid #f0f0f0"></div>
<svg class="ab" style="left:693.50px;top:338.00px" width="14" height="14" viewBox="0 0 14 14"><path d="M7 3.2v7.6 M3.2 7h7.6" stroke="#111" stroke-width="1.9"/></svg>
<div class="ab" style="left:716.00px;top:338.50px;width:13.00px;height:13.00px;border-radius:3px;background:#f8f8f8;border:1px solid #f0f0f0"></div>
<svg class="ab" style="left:715.50px;top:338.00px" width="14" height="14" viewBox="0 0 14 14"><path d="M3.5 3.5h6l1.6 1.6v6h-7.6z" fill="none" stroke="#46395c" stroke-width="1.2"/><path d="M5 3.6h3.4v2.2h-3.4z" fill="#5a4575"/><path d="M5 8.2h4.4v2.6h-4.4z" fill="#9a78b4"/></svg>
<div class="ab" style="left:739.00px;top:338.50px;width:13.00px;height:13.00px;border-radius:3px;background:#f8f8f8;border:1px solid #f0f0f0"></div>
<svg class="ab" style="left:738.50px;top:338.00px" width="14" height="14" viewBox="0 0 14 14"><path d="M8.3 3.6H4.6q-1 0-1 1v5.3q0 1 1 1h5.3q1 0 1-1V7.2" fill="none" stroke="#3d3d46" stroke-width="1.2"/><path d="M6.3 8.6l0.5-1.8l4.1-4.1l1.3 1.3l-4.1 4.1z" fill="#222"/></svg>
<div class="ab" style="left:762.50px;top:338.50px;width:13.00px;height:13.00px;border-radius:3px;background:#f8f8f8;border:1px solid #f0f0f0"></div>
<svg class="ab" style="left:762.00px;top:338.00px" width="14" height="14" viewBox="0 0 14 14"><path d="M4.6 6h5.2v5.2q0 .6-.6 .6h-4q-.6 0-.6-.6z" fill="#a565ad" stroke="#5a3f66" stroke-width="0.6"/><path d="M3.8 5.1h6.8 M5.8 5v-1.2h2.8v1.2" fill="none" stroke="#3f3448" stroke-width="1.1"/><path d="M5.6 7.6h3.2 M5.6 9.8h3.2" stroke="#f0e6f2" stroke-width="0.9"/></svg>
<div class="ab" style="left:325.00px;top:359.00px;width:473.00px;height:23.00px;background:#f7f7f7;border-top:1px solid #e3e3e3;border-bottom:1px solid #e3e3e3"></div>
<div class="ab" style="left:342.00px;top:359.00px;width:1.00px;height:23.00px;background:#e6e6e6"></div>
<div class="ab" style="left:361.00px;top:359.00px;width:1.00px;height:23.00px;background:#e6e6e6"></div>
<div class="ab" style="left:444.00px;top:359.00px;width:1.00px;height:23.00px;background:#e6e6e6"></div>
<div class="ab" style="left:525.00px;top:359.00px;width:1.00px;height:23.00px;background:#e6e6e6"></div>
<div class="ab" style="left:607.00px;top:359.00px;width:1.00px;height:23.00px;background:#e6e6e6"></div>
<div class="ab" style="left:689.00px;top:359.00px;width:1.00px;height:23.00px;background:#e6e6e6"></div>
<div class="ab" style="left:771.00px;top:359.00px;width:1.00px;height:23.00px;background:#e6e6e6"></div>
<div class="ab" style="left:347.00px;top:366.00px;width:10.00px;height:10.00px;border:1px solid #a9a9a9;border-radius:1.5px;background:#fff"></div>
<div class="t" style="left:367.00px;top:366.35px;font-size:8.3px;color:#6e6e6e;">操作</div>
<div class="t" style="left:449.00px;top:366.35px;font-size:8.3px;color:#6e6e6e;">测量点编号</div>
<div class="t" style="left:531.00px;top:366.35px;font-size:8.3px;color:#6e6e6e;">测量点</div>
<div class="t" style="left:613.00px;top:366.35px;font-size:8.3px;color:#6e6e6e;">获取方式</div>
<div class="t" style="left:695.00px;top:366.35px;font-size:8.3px;color:#6e6e6e;">测量指标</div>
<div class="ab" style="left:511.00px;top:369.50px;width:0;height:0;border-left:3.00px solid transparent;border-right:3.00px solid transparent;border-top:3.20px solid #444"></div>
<div class="ab" style="left:593.00px;top:369.50px;width:0;height:0;border-left:3.00px solid transparent;border-right:3.00px solid transparent;border-top:3.20px solid #444"></div>
<div class="ab" style="left:676.00px;top:369.50px;width:0;height:0;border-left:3.00px solid transparent;border-right:3.00px solid transparent;border-top:3.20px solid #444"></div>
<div class="ab" style="left:758.00px;top:369.50px;width:0;height:0;border-left:3.00px solid transparent;border-right:3.00px solid transparent;border-top:3.20px solid #444"></div>
</body></html>
